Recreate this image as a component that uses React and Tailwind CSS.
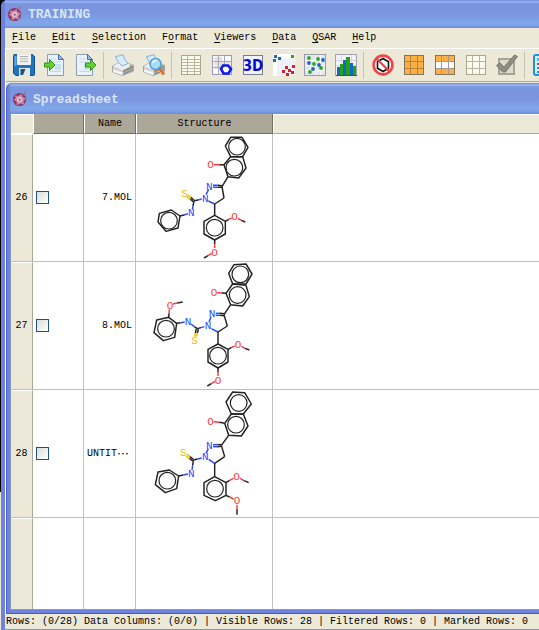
const menus = [
  ['', 'F', 'ile'],
  ['', 'E', 'dit'],
  ['', 'S', 'election'],
  ['F', 'o', 'rmat'],
  ['', 'V', 'iewers'],
  ['', 'D', 'ata'],
  ['', 'Q', 'SAR'],
  ['', 'H', 'elp'],
];

const INK = '#222222';
const RED = '#ff3838';
const BLUE = '#2b48ff';
const GOLD = '#e8c000';

/* Bonds are [x1, y1, x2, y2, colour]; atoms are [letter, x, y, colour]. */
const molecules = {
  seven: {
    rings: [
      ['284,16 318,16 336,46 320,74 284,74 268,42', 303, 44],
      ['284,74 320,74 330,108 308,138 276,134 264,98', 295, 107],
      ['106,234 132,252 126,288 90,298 66,270 70,244', 99, 266],
      ['236,250 268,268 268,306 236,324 204,306 204,268', 236, 287],
    ],
    bonds: [
      [234, 98, 250, 98, RED], [250, 98, 264, 98, INK],
      [276, 134, 258, 164, INK],
      [231, 160, 245, 160, BLUE], [231, 166, 245, 166, BLUE], [245, 160, 258, 161, INK], [245, 166, 258, 166, INK],
      [258, 164, 264, 198, INK], [264, 198, 236, 216, INK], [236, 216, 217, 207, BLUE],
      [218, 172, 210, 188, BLUE],
      [197, 201, 186, 204, BLUE], [186, 204, 174, 206, INK],
      [174, 204, 164, 196, INK], [172, 209, 162, 201, INK], [164, 196, 155, 189, GOLD], [162, 201, 152, 194, GOLD],
      [174, 206, 171, 222, INK], [171, 222, 169, 233, BLUE],
      [156, 245, 144, 249, BLUE], [144, 249, 132, 252, INK],
      [236, 216, 236, 250, INK],
      [268, 268, 278, 262, INK], [278, 262, 287, 258, RED], [306, 259, 316, 265, RED], [316, 265, 328, 270, INK],
      [236, 324, 236, 337, INK], [236, 337, 236, 348, RED], [227, 364, 216, 371, RED], [216, 371, 204, 378, INK],
    ],
    atoms: [['O', 224, 98, RED], ['N', 220, 162, BLUE], ['N', 208, 198, BLUE], ['S', 146, 184, GOLD], ['N', 166, 242, BLUE], ['O', 296, 254, RED], ['O', 236, 360, RED]],
  },
  eight: {
    rings: [
      ['294,14 330,12 348,42 330,72 290,72 278,40', 313, 43],
      ['290,72 330,76 340,110 320,138 284,134 270,100', 305, 105],
      ['98,172 122,190 116,232 82,242 54,218 62,180', 90, 206],
      ['246,252 276,268 276,306 246,324 216,306 216,268', 246, 287],
    ],
    bonds: [
      [244, 98, 257, 99, RED], [257, 99, 270, 100, INK],
      [284, 134, 264, 164, INK],
      [239, 160, 252, 160, BLUE], [239, 166, 252, 166, BLUE], [252, 160, 264, 161, INK], [252, 166, 264, 167, INK],
      [264, 164, 274, 198, INK], [274, 198, 246, 216, INK], [246, 216, 226, 206, BLUE],
      [225, 171, 219, 187, BLUE],
      [205, 200, 195, 203, BLUE], [195, 203, 184, 206, INK],
      [181, 206, 178, 219, INK], [187, 207, 184, 219, INK], [178, 219, 176, 230, GOLD], [184, 219, 182, 230, GOLD],
      [184, 206, 175, 200, INK], [175, 200, 165, 192, BLUE],
      [146, 186, 134, 188, BLUE], [134, 188, 122, 190, INK],
      [98, 172, 99, 160, INK], [99, 160, 100, 148, RED], [111, 132, 124, 129, RED], [124, 129, 140, 126, INK],
      [246, 216, 246, 252, INK],
      [276, 268, 287, 262, INK], [287, 262, 296, 258, RED], [316, 259, 327, 265, RED], [327, 265, 340, 270, INK],
      [246, 324, 246, 337, INK], [246, 337, 246, 348, RED], [237, 364, 226, 371, RED], [226, 371, 214, 378, INK],
    ],
    atoms: [['O', 234, 97, RED], ['N', 228, 160, BLUE], ['N', 216, 197, BLUE], ['S', 176, 242, GOLD], ['N', 156, 184, BLUE], ['O', 102, 135, RED], ['O', 306, 254, RED], ['O', 246, 360, RED]],
  },
  untitled: {
    rings: [
      ['290,12 326,14 346,48 322,78 286,78 270,42', 308, 45],
      ['286,78 322,78 336,114 316,144 278,142 266,106', 300, 110],
      ['100,246 128,264 122,302 88,314 58,290 66,252', 94, 278],
      ['236,266 270,284 270,322 238,338 204,322 204,284', 237, 302],
    ],
    bonds: [
      [234, 101, 250, 103, RED], [250, 103, 266, 106, INK],
      [278, 142, 256, 172, INK],
      [231, 170, 244, 170, BLUE], [231, 176, 244, 176, BLUE], [244, 170, 256, 170, INK], [244, 176, 256, 175, INK],
      [256, 172, 266, 206, INK], [266, 206, 236, 226, INK], [236, 226, 218, 214, BLUE],
      [217, 182, 210, 196, BLUE],
      [197, 210, 185, 213, BLUE], [185, 213, 172, 216, INK],
      [172, 214, 162, 206, INK], [170, 219, 160, 211, INK], [162, 206, 153, 199, GOLD], [160, 211, 150, 204, GOLD],
      [172, 216, 170, 232, INK], [170, 232, 168, 246, BLUE],
      [156, 258, 142, 261, BLUE], [142, 261, 128, 264, INK],
      [236, 226, 236, 266, INK],
      [270, 284, 281, 277, INK], [281, 277, 292, 271, RED], [312, 271, 324, 278, RED], [324, 278, 338, 284, INK],
      [270, 322, 281, 327, INK], [281, 327, 293, 333, RED], [303, 350, 303, 364, RED], [303, 364, 303, 380, INK],
    ],
    atoms: [['O', 224, 100, RED], ['N', 220, 172, BLUE], ['N', 208, 206, BLUE], ['S', 142, 194, GOLD], ['N', 166, 256, BLUE], ['O', 302, 266, RED], ['O', 303, 338, RED]],
  },
};

const rows = [
  { id: 26, name: '7.MOL', molecule: 'seven' },
  { id: 27, name: '8.MOL', molecule: 'eight' },
  { id: 28, name: 'UNTIT', clipped: true, molecule: 'untitled' },
];

function Molecule({ data }) {
  return (
    <svg className="block h-[127px] w-[130px]" viewBox="0 6 390 381" fill="none" strokeWidth="4.400">
      {data.rings.map(([points, cx, cy]) => (
        <g key={points} stroke={INK} strokeLinejoin="round">
          <polygon points={points} />
          <circle cx={cx} cy={cy} r="25" strokeWidth="3.600" />
        </g>
      ))}
      {data.bonds.map(([x1, y1, x2, y2, color], i) => (
        <line key={i} x1={x1} y1={y1} x2={x2} y2={y2} stroke={color} />
      ))}
      {data.atoms.map(([letter, x, y, color], i) => (
        <text key={i} x={x} y={y + 11} fill={color} textAnchor="middle" fontSize="33" className="font-['Liberation_Mono',monospace]">
          {letter}
        </text>
      ))}
    </svg>
  );
}

function AppLogo() {
  return (
    <svg className="size-4 shrink-0" viewBox="0 0 16 16">
      <circle cx="7.500" cy="8.500" r="6.600" fill="#8a3a68" />
      <path d="M2.500 4.500l4 .5 3-2 1 3 3.500 1.500-2.500 2.500.5 3.500-4-1-3 2-.5-4L1.500 8.500 4 7z" fill="#c98aa9" />
      <path d="M5 7l3-1.500L10.500 7.500l-.5 3L7 11.500 5 10z" fill="#e3bccb" />
      <path d="M6.500 8.500l1.500-1 1 1.500-1.500 1z" fill="#a0527c" />
      <path d="M11 4l3-3" stroke="#d8507c" strokeWidth="1.300" />
      <path d="M12 1.500l1.500-.5" stroke="#5fa070" />
    </svg>
  );
}

function Svg({ children }) {
  return <svg className="size-[22px] shrink-0" viewBox="0 0 22 22" fill="none">{children}</svg>;
}

const SaveIcon = () => (
  <Svg>
    <path d="M.5 1.500q0-1 1-1h18l2 2v18q0 1-1 1H3l-2.500-2z" fill="#2272c0" stroke="#0f549e" />
    <path d="M1.500 2h2v10h-2z" fill="#63a9e6" />
    <path d="M4 0h14v10q0 1-1 1H5q-1 0-1-1z" fill="#f0f0f0" />
    <path d="M7 2.500h8M7 5h8M7 7.500h8" stroke="#b0b0b0" />
    <rect x="6" y="14" width="11" height="8" fill="#e4e6e8" />
    <path d="M7.500 15h5l-2.500 6H7.500z" fill="#1b4f86" />
  </Svg>
);

function Page({ x }) {
  return (
    <g transform={`translate(${x} 0)`}>
      <path d="M.5.5h11l5 5v16H.5z" fill="#eaf3fb" stroke="#8d9db4" />
      <path d="M11.500.5v5h5z" fill="#9dbbe0" stroke="#4d6f9e" />
      <path d="M3 5h6M3 8h10M3 17.500h11" stroke="#c3d5ea" />
      <rect x="8" y="10" width="6" height="6" fill="#c9dff4" />
    </g>
  );
}

const GreenArrow = ({ x }) => (
  <path transform={`translate(${x} 0)`} d="M.5 9h5V5.500l5.500 5.500-5.500 5.500V13h-5z" fill="#62d332" stroke="#2f8f17" />
);

const ImportIcon = () => <Svg><Page x={3} /><GreenArrow x={0} /></Svg>;
const ExportIcon = () => <Svg><Page x={1} /><GreenArrow x={10} /></Svg>;

const PrinterShape = () => (
  <>
    <path d="M.5 12l8-4 13 3v6l-11 4.500L.5 18z" fill="#d4d4d4" stroke="#a5a5a5" />
    <path d="M1 12l7.500-4 12.500 3-10.500 5z" fill="#efefef" />
    <path d="M3.500 2.500Q8 2 11 .5q1 5 5 9l-6 2.500Q5 8 3.500 2.500z" fill="#d9ecfb" stroke="#86b0d6" />
    <path d="M1 15.500l9.500 3V21L1 18z" fill="#f7f7f7" />
    <path d="M11 16.500l10-5v5l-10 4.500z" fill="#8c8c8c" />
    <path d="M11 19l10-4.500" stroke="#b8b8b8" />
    <path d="M17.500 12l2-.7" stroke="#4bcf3a" strokeWidth="1.500" />
  </>
);
const PrintIcon = () => <Svg><PrinterShape /></Svg>;
const PreviewIcon = () => (
  <Svg>
    <PrinterShape />
    <path d="M16 15.500l5 5" stroke="#e8692a" strokeWidth="3.200" />
    <path d="M15.500 16.500l4 4" stroke="#f8c27a" />
    <circle cx="12.500" cy="10" r="5.500" fill="#a9def8" stroke="#4f9fd8" strokeWidth="1.500" />
    <path d="M9.500 9q1-3 4-2.500" stroke="#fff" strokeWidth="1.500" />
  </Svg>
);

const SheetIcon = () => (
  <Svg>
    <rect x="1.500" y="1.500" width="19" height="19" fill="#fbfaee" stroke="#aaa68f" />
    <path d="M7.500 2v18M14.500 2v18M2 5.500h18M2 8.500h18M2 11.500h18M2 14.500h18M2 17.500h18" stroke="#b9b5a0" />
  </Svg>
);

const FormIcon = () => (
  <Svg>
    <rect x="1.500" y="1.500" width="19" height="19" fill="#f8f8ff" stroke="#9c9cba" />
    <path d="M3 3h8v4h8v5h-8v3H4z" fill="#e7e3d2" />
    <path d="M7.500 1v20M13.500 1v20M1 7.500h20M1 13.500h20" stroke="#a9a9bd" />
    <path d="M12 11.500h5l3 3.500-2.500 4.500h-5L10 15z" fill="#fff" stroke="#1119f5" strokeWidth="2.600" />
  </Svg>
);

const ThreeDIcon = () => (
  <Svg>
    <rect x="1.500" y="1.500" width="19" height="19" fill="#eef3ff" stroke="#7b7b8c" />
    <text x="11" y="17" textAnchor="middle" fontSize="15" fontWeight="700" fill="#0a0ad0" className="font-['Liberation_Sans_Narrow','DejaVu_Sans_Condensed','Liberation_Sans',sans-serif]">3D</text>
  </Svg>
);

const ScatterIcon = () => (
  <Svg>
    <rect width="22" height="22" fill="#fff" />
    <rect x="4" y="5" width="18" height="17" fill="#eef0fa" />
    <path d="M0 5h3v3H0zM1 1h3v3H1zM5 3h3v3H5z" fill="#1c66c4" />
    <path d="M18 1h3v3h-3z" fill="#29a512" />
    <path d="M12 12h3v3h-3zM19 11h3v3h-3zM9 16h3v3H9zM15 15h3v3h-3zM18 17h3v3h-3zM13 19h3v3h-3z" fill="#d32229" />
  </Svg>
);

const BubbleIcon = () => (
  <Svg>
    <rect x=".5" y=".5" width="21" height="21" fill="#e4e6f6" stroke="#9999b0" />
    <path d="M1 6.500h20M1 11.500h20M1 16.500h20M6.500 1v20M11.500 1v20M16.500 1v20" stroke="#fff" />
    {[[5, 4], [14, 5], [10, 10], [17, 14], [6, 18]].map(([x, y]) => <circle key={y} cx={x} cy={y} r="1.900" fill="#2aa81a" />)}
    {[[19, 6], [5, 9], [15, 11], [9, 15]].map(([x, y]) => <circle key={y} cx={x} cy={y} r="1.900" fill="#1c66c4" />)}
  </Svg>
);

const HistogramIcon = () => (
  <Svg>
    <rect x=".5" y=".5" width="21" height="21" fill="#f1f2fb" stroke="#a3a3b8" />
    <path d="M1 6.500h20M1 11.500h20M6.500 1v20M16.500 1v20" stroke="#d5d6e6" />
    <path d="M2 13h3v8H2zM8 6h3v15H8zM15 9h3v12h-3z" fill="#1267c8" />
    <path d="M5 10h3v11H5zM11 3h4v18h-4zM18 12h3v9h-3z" fill="#27a114" />
    <path d="M1 21.500h21" stroke="#28507c" />
  </Svg>
);

const NoStructureIcon = () => (
  <Svg>
    <circle cx="11" cy="11" r="9.400" fill="#fff" stroke="#f04444" strokeWidth="2.600" />
    <path d="M11 4.500l5.500 3.200v6.600L11 17.500l-5.500-3.200V7.700z" stroke="#111" strokeWidth="1.600" />
    <path d="M4.500 4.500l13 13" stroke="#f04444" strokeWidth="2.200" />
  </Svg>
);

function GridIcon({ top, middle, line, edge }) {
  return (
    <Svg>
      <rect x="1.500" y="1.500" width="19" height="19" fill={top} />
      <rect x="1.500" y="7.500" width="19" height="7" fill={middle} />
      <path d="M7.500 2v18M14.500 2v18M2 7.500h18M2 14.500h18" stroke={line} />
      <rect x="1.500" y="1.500" width="19" height="19" stroke={edge} />
    </Svg>
  );
}
const SelectAllIcon = () => <GridIcon top="#fdae45" middle="#fdae45" line="#b98335" edge="#85755a" />;
const SelectRowIcon = () => <GridIcon top="#fdae45" middle="#ffffff" line="#a59a92" edge="#85755a" />;
const ClearIcon = () => <GridIcon top="#fbfaee" middle="#fbfaee" line="#b9b5a0" edge="#aaa68f" />;

const CheckIcon = () => (
  <Svg>
    <rect x="3" y="5" width="15" height="15" fill="#dedbcd" stroke="#a6a394" strokeWidth="2" />
    <path d="M.5 11.500L4 9l4 4L18.500 1l3 1.500L9.500 18h-3z" fill="#8f8d84" stroke="#77756d" />
  </Svg>
);

const CalculatorIcon = () => (
  <Svg>
    <rect x="1" y="1" width="20" height="20" rx="2" fill="#d7eefc" stroke="#1f8fe0" strokeWidth="2" />
    <path d="M4 4h14v3H4z" fill="#57b7f2" />
    <path d="M4 9h3v2H4z" fill="#e03a2a" />
    <path d="M4 13h3v2H4zM4 17h3v2H4z" fill="#2a8ae0" />
  </Svg>
);

const toolGroups = [
  [['Save', SaveIcon], ['Import', ImportIcon], ['Export', ExportIcon]],
  [['Print', PrintIcon], ['Print preview', PreviewIcon]],
  [['Spreadsheet', SheetIcon], ['Form view', FormIcon], ['3D view', ThreeDIcon], ['Scatter plot', ScatterIcon], ['3D plot', BubbleIcon], ['Histogram', HistogramIcon]],
  [['Hide structure', NoStructureIcon], ['Select all', SelectAllIcon], ['Select rows', SelectRowIcon], ['Clear selection', ClearIcon], ['Mark', CheckIcon]],
  [['Calculator', CalculatorIcon]],
];

function TitleBar({ title, className }) {
  return (
    <header className={`flex shrink-0 items-center gap-[5px] bg-[linear-gradient(#6a86d8,#9ab6ee_6%,#7a94de_14%,#7b96e0_50%,#80a6e8_80%,#7ea2e6_90%,#6d8adb)] ${className}`}>
      <AppLogo />
      <h1 className="pt-0.5 text-[13px] leading-4 font-bold text-[#d9e4f8]">{title}</h1>
    </header>
  );
}

function Toolbar() {
  return (
    <div className="flex h-[34px] shrink-0 items-center overflow-hidden border-t border-b border-t-white border-b-[#aca899] pl-0.5">
      {toolGroups.map((group, i) => (
        <div key={i} className="flex shrink-0 items-center">
          {i > 0 && <div className="mr-[3px] ml-0.5 h-[27px] w-px bg-[#c5c2b2]" />}
          {group.map(([label, Icon]) => (
            <button key={label} type="button" aria-label={label} className="flex h-8 w-[31px] items-center justify-center">
              <Icon />
            </button>
          ))}
        </div>
      ))}
    </div>
  );
}

const headCell = 'border-r border-b border-l border-r-[#716f64] border-b-[#716f64] border-l-white bg-[#aca899] p-0 text-center font-normal';
const bodyCell = 'border-r border-b border-[#c0c0c0] p-0';
const rowHead = 'border-t border-r border-b border-t-white border-r-[#aca899] border-b-[#c0c0c0] bg-[#ece9d8] p-0 text-center font-normal';

function Spreadsheet() {
  return (
    <table className="w-full table-fixed border-separate border-spacing-0">
      <colgroup>
        <col className="w-[22px]" />
        <col className="w-[51px]" />
        <col className="w-[52px]" />
        <col className="w-[137px]" />
        <col />
      </colgroup>
      <thead>
        <tr className="h-5">
          <td className="border-t border-b border-t-white border-b-white bg-[#ece9d8] p-0" />
          <td className={headCell} />
          <th scope="col" className={headCell}>Name</th>
          <th scope="col" className={headCell}>Structure</th>
          <td className="border-t border-b border-l border-t-white border-b-[#aca899] border-l-white bg-[#ece9d8] p-0" />
        </tr>
      </thead>
      <tbody>
        {rows.map((row) => (
          <tr key={row.id} className="h-32">
            <th scope="row" className={rowHead}>{row.id}</th>
            <td className={bodyCell}>
              <input
                type="checkbox"
                aria-label={`Mark row ${row.id}`}
                className="ml-[3px] block size-[13px] appearance-none border border-[#1c5180] bg-linear-to-br from-[#dcdcd7] to-white"
              />
            </td>
            <td className={bodyCell}>
              <div className={`flex px-[3px] ${row.clipped ? 'justify-start' : 'justify-end'}`}>
                {row.name}
                {row.clipped && <span className="font-['Noto_Sans_CJK_SC',sans-serif] text-[12px]">⋯</span>}
              </div>
            </td>
            <td className={bodyCell}><Molecule data={molecules[row.molecule]} /></td>
            <td className="border-b border-[#c0c0c0] p-0" />
          </tr>
        ))}
        <tr className="h-[91px]">
          <td className="border-t border-r border-t-white border-r-[#aca899] bg-[#ece9d8] p-0" />
          <td className="border-r border-[#c0c0c0] p-0" />
          <td className="border-r border-[#c0c0c0] p-0" />
          <td className="border-r border-[#c0c0c0] p-0" />
          <td className="p-0" />
        </tr>
      </tbody>
    </table>
  );
}

export default function App() {
  return (
    <div className="flex min-h-screen overflow-hidden bg-linear-to-b from-black from-78% to-[#ece9d8] to-78% pl-px font-['Liberation_Mono','Noto_Sans_CJK_SC',monospace] text-[10px] leading-4 text-black">
      <div className="flex min-w-0 flex-1 flex-col bg-black">
        <div className="flex flex-1 flex-col rounded-tl-md border-b-2 border-l-4 border-b-[#7b8fe0] border-l-[#6f83dc] bg-[#7b98e2]">
          <TitleBar title="TRAINING" className="h-7 pl-0.5" />
          <div className="flex flex-1 flex-col bg-[#ece9d8]">
            <nav className="flex h-5 shrink-0 items-center gap-4 overflow-hidden pl-[7px]">
              {menus.map(([before, key, after]) => (
                <button key={key} type="button" className="leading-4">
                  {before}<span className="underline underline-offset-2">{key}</span>{after}
                </button>
              ))}
            </nav>
            <div className="flex flex-1 flex-col border-l border-white">
              <Toolbar />
              <main className="mt-px flex flex-1 flex-col overflow-hidden rounded-tl-md border-b border-l border-b-[#4c57b8] border-l-[#4f5cc8] bg-[#6f83dc] pb-[3px] pl-[3px]">
                <TitleBar title="Spreadsheet" className="h-[31px] pl-0.5" />
                <div className="flex-1 border-b border-l border-[#7f9db9] bg-white">
                  <Spreadsheet />
                </div>
              </main>
            </div>
            <footer className="flex h-[15px] shrink-0 items-center overflow-hidden pl-px whitespace-pre">
              Rows: (0/28) Data Columns: (0/0) | Visible Rows: 28 | Filtered Rows: 0 | Marked Rows: 0
            </footer>
          </div>
        </div>
      </div>
    </div>
  );
}
